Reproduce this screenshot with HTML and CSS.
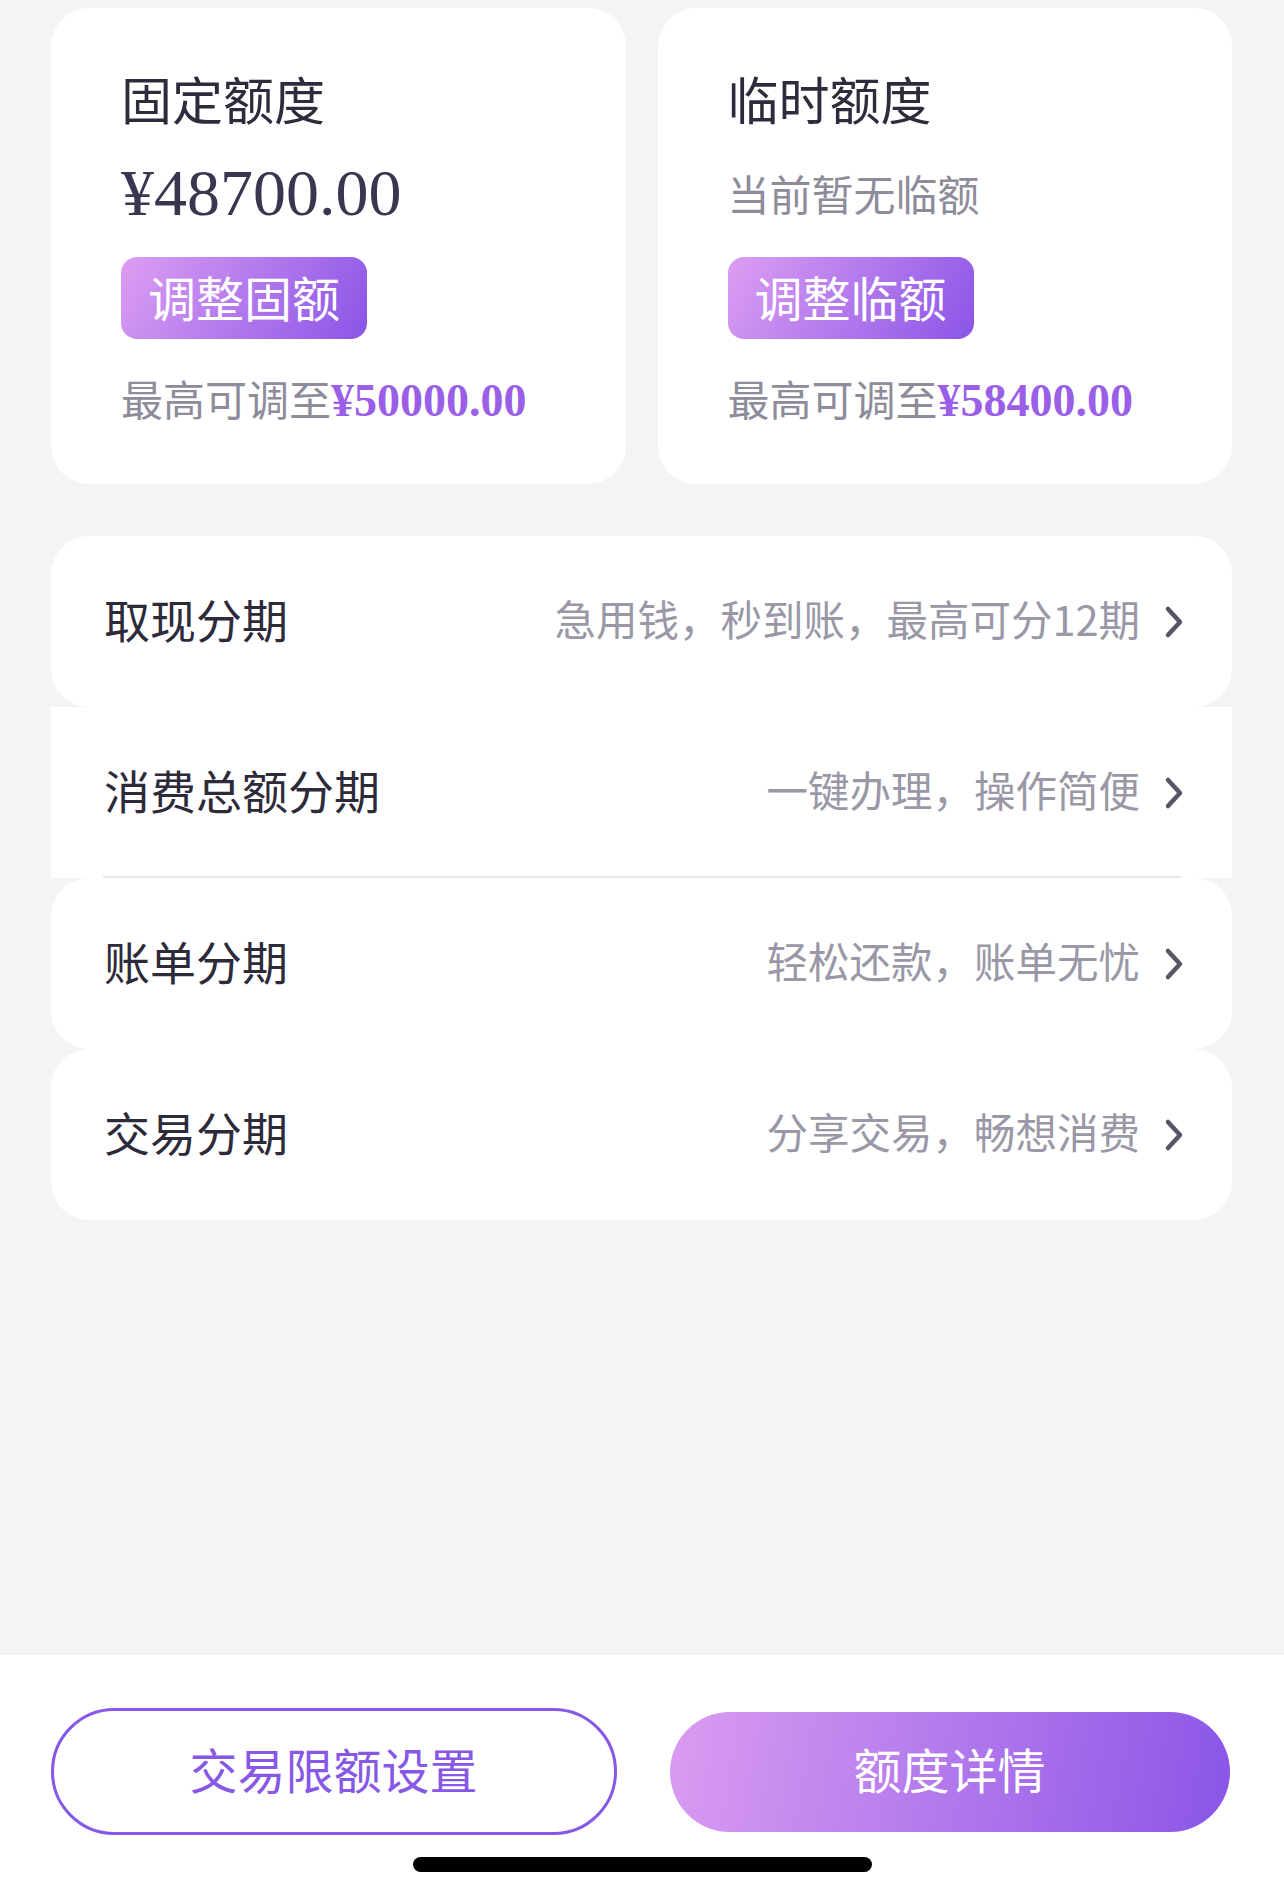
FILE: index.html
```html
<!DOCTYPE html>
<html lang="zh-CN">
<head>
    <meta charset="UTF-8">
    <meta name="viewport" content="width=device-width, initial-scale=1.0">
    <title>额度管理</title>
    <link rel="stylesheet" href="styles.css">
</head>
<body>
    <div class="page">
        <main class="content">
            <section class="quota-row">
                <div class="quota-card">
                    <h3 class="quota-title">固定额度</h3>
                    <div class="quota-amount">¥48700.00</div>
                    <button type="button" class="adjust-btn">调整固额</button>
                    <p class="quota-limit">最高可调至<span class="limit-num">¥50000.00</span></p>
                </div>
                <div class="quota-card">
                    <h3 class="quota-title">临时额度</h3>
                    <div class="quota-amount quota-empty">当前暂无临额</div>
                    <button type="button" class="adjust-btn">调整临额</button>
                    <p class="quota-limit">最高可调至<span class="limit-num">¥58400.00</span></p>
                </div>
            </section>

            <section class="install-list">
                <a class="install-row" href="#">
                    <span class="row-label">取现分期</span>
                    <span class="row-desc">急用钱，秒到账，最高可分12期</span>
                    <svg class="chevron" viewBox="0 0 20 34"><polyline points="4,4 16,17 4,30"/></svg>
                </a>
                <a class="install-row install-row--flat" href="#">
                    <span class="row-label">消费总额分期</span>
                    <span class="row-desc">一键办理，操作简便</span>
                    <svg class="chevron" viewBox="0 0 20 34"><polyline points="4,4 16,17 4,30"/></svg>
                </a>
                <a class="install-row" href="#">
                    <span class="row-label">账单分期</span>
                    <span class="row-desc">轻松还款，账单无忧</span>
                    <svg class="chevron" viewBox="0 0 20 34"><polyline points="4,4 16,17 4,30"/></svg>
                </a>
                <a class="install-row" href="#">
                    <span class="row-label">交易分期</span>
                    <span class="row-desc">分享交易，畅想消费</span>
                    <svg class="chevron" viewBox="0 0 20 34"><polyline points="4,4 16,17 4,30"/></svg>
                </a>
            </section>
        </main>

        <footer class="bottom-bar">
            <div class="bottom-actions">
                <button type="button" class="btn-outline">交易限额设置</button>
                <button type="button" class="btn-fill">额度详情</button>
            </div>
            <div class="home-indicator"></div>
        </footer>
    </div>
</body>
</html>
```

FILE: styles.css
```css
body {
    margin: 0;
    background: #f4f4f6;
    font-family: "Noto Sans CJK SC", "Noto Sans", sans-serif;
    color: #2f2b3d;
}

.page {
    display: flex;
    flex-direction: column;
    min-height: 100vh;
}

.content {
    flex: 1;
    padding: 8px 52px 0 51px;
}

.quota-row {
    display: grid;
    grid-template-columns: 1fr 1fr;
    column-gap: 32px;
}

.quota-card {
    height: 476px;
    box-sizing: border-box;
    background: #fff;
    border-radius: 38px;
    padding: 60px 40px 0 70px;
    display: flex;
    flex-direction: column;
    align-items: flex-start;
}

.quota-title {
    margin: 0;
    font-size: 51px;
    line-height: 60px;
    font-weight: 400;
    color: #2f2b3d;
}

.quota-amount {
    margin-top: 25px;
    height: 80px;
    line-height: 80px;
    font-family: "Liberation Serif", serif;
    font-size: 66px;
    color: #3c3550;
}

.quota-empty {
    font-family: "Noto Sans CJK SC", sans-serif;
    font-size: 42px;
    color: #8e8c9a;
}

.adjust-btn {
    margin-top: 24px;
    height: 82px;
    padding: 0 27px 4px;
    border: none;
    border-radius: 16px;
    background: linear-gradient(120deg, #dc9ef2, #8a55e7);
    color: #fff;
    font-family: "Noto Sans CJK SC", sans-serif;
    font-size: 48px;
    line-height: 78px;
}

.quota-limit {
    margin: 31px 0 0;
    height: 56px;
    line-height: 56px;
    font-size: 42px;
    color: #8e8c9a;
    white-space: nowrap;
}

.limit-num {
    font-family: "Liberation Serif", serif;
    font-weight: 700;
    font-size: 46px;
    color: #9a5fe6;
}

.install-list {
    margin-top: 52px;
    display: flex;
    flex-direction: column;
}

.install-row {
    position: relative;
    display: flex;
    align-items: center;
    height: 171px;
    padding: 0 48px 0 53px;
    background: #fff;
    border-radius: 38px;
    text-decoration: none;
}

.install-row--flat {
    border-radius: 0;
}

.install-row--flat::after {
    content: "";
    position: absolute;
    left: 52px;
    right: 51px;
    bottom: 0;
    height: 2px;
    background: #e8e8ed;
}

.row-label {
    flex: 1;
    margin-bottom: 7px;
    font-size: 46px;
    color: #2d2a3a;
}

.row-desc {
    margin-bottom: 7px;
    font-size: 41.5px;
    color: #9a98a6;
}

.chevron {
    width: 20px;
    height: 34px;
    margin-left: 24px;
    fill: none;
    stroke: #595566;
    stroke-width: 4.5;
    stroke-linecap: round;
    stroke-linejoin: round;
}

.bottom-bar {
    margin-top: 435px;
    background: #fff;
    padding: 53px 0 22px;
    display: flex;
    flex-direction: column;
    align-items: center;
}

.bottom-actions {
    display: grid;
    grid-template-columns: 566px 560px;
    column-gap: 53px;
    align-items: center;
    height: 127px;
    margin-left: -4px;
}

.btn-outline {
    height: 127px;
    padding-bottom: 8px;
    border: 3px solid #8757e6;
    border-radius: 64px;
    background: #fff;
    color: #8757e6;
    font-family: "Noto Sans CJK SC", sans-serif;
    font-size: 48px;
}

.btn-fill {
    height: 120px;
    padding-bottom: 8px;
    border: none;
    border-radius: 60px;
    background: linear-gradient(100deg, #da9cf1, #8a55e7);
    color: #fff;
    font-family: "Noto Sans CJK SC", sans-serif;
    font-size: 48px;
}

.home-indicator {
    margin-top: 22px;
    width: 459px;
    height: 15px;
    border-radius: 8px;
    background: #000;
}
```
